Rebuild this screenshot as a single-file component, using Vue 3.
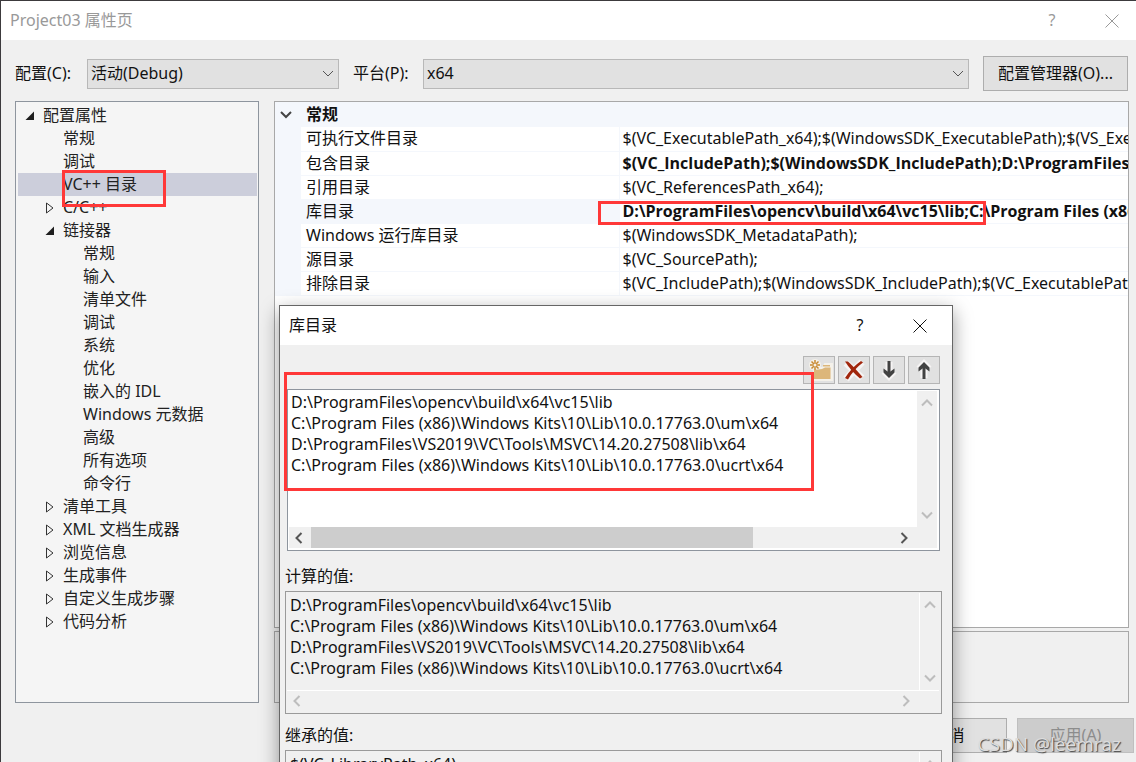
<script setup>
import { ref } from 'vue'

const config = ref('活动(Debug)')
const platform = ref('x64')

const tree = [
  { label: '配置属性', level: 0, state: 'open' },
  { label: '常规', level: 1 },
  { label: '调试', level: 1 },
  { label: 'VC++ 目录', level: 1, selected: true },
  { label: 'C/C++', level: 1, state: 'closed' },
  { label: '链接器', level: 1, state: 'open' },
  { label: '常规', level: 2 },
  { label: '输入', level: 2 },
  { label: '清单文件', level: 2 },
  { label: '调试', level: 2 },
  { label: '系统', level: 2 },
  { label: '优化', level: 2 },
  { label: '嵌入的 IDL', level: 2 },
  { label: 'Windows 元数据', level: 2 },
  { label: '高级', level: 2 },
  { label: '所有选项', level: 2 },
  { label: '命令行', level: 2 },
  { label: '清单工具', level: 1, state: 'closed' },
  { label: 'XML 文档生成器', level: 1, state: 'closed' },
  { label: '浏览信息', level: 1, state: 'closed' },
  { label: '生成事件', level: 1, state: 'closed' },
  { label: '自定义生成步骤', level: 1, state: 'closed' },
  { label: '代码分析', level: 1, state: 'closed' },
]

const rows = [
  { name: '可执行文件目录', value: '$(VC_ExecutablePath_x64);$(WindowsSDK_ExecutablePath);$(VS_ExecutablePath);' },
  { name: '包含目录', value: '$(VC_IncludePath);$(WindowsSDK_IncludePath);D:\\ProgramFiles\\opencv\\build\\include', bold: true },
  { name: '引用目录', value: '$(VC_ReferencesPath_x64);' },
  { name: '库目录', value: 'D:\\ProgramFiles\\opencv\\build\\x64\\vc15\\lib;C:\\Program Files (x86)\\Windows Kits', bold: true, active: true },
  { name: 'Windows 运行库目录', value: '$(WindowsSDK_MetadataPath);' },
  { name: '源目录', value: '$(VC_SourcePath);' },
  { name: '排除目录', value: '$(VC_IncludePath);$(WindowsSDK_IncludePath);$(VC_ExecutablePath_x64);' },
]

const paths = [
  'D:\\ProgramFiles\\opencv\\build\\x64\\vc15\\lib',
  'C:\\Program Files (x86)\\Windows Kits\\10\\Lib\\10.0.17763.0\\um\\x64',
  'D:\\ProgramFiles\\VS2019\\VC\\Tools\\MSVC\\14.20.27508\\lib\\x64',
  'C:\\Program Files (x86)\\Windows Kits\\10\\Lib\\10.0.17763.0\\ucrt\\x64',
].join('\n')
const userPaths = ref(paths)
const inherited = '$(VC_LibraryPath_x64)'
</script>

<template>
  <div class="window">
    <header class="titlebar">
      <h1 class="title">Project03 属性页</h1>
      <button class="caption" aria-label="帮助">?</button>
      <button class="caption" aria-label="关闭">
        <svg width="14" height="14" viewBox="0 0 14 14"><path d="M.5 .5l13 13M13.5 .5l-13 13" /></svg>
      </button>
    </header>

    <div class="options">
      <label for="cfg">配置(C):</label>
      <div class="combo combo-config">
        <select id="cfg" v-model="config"><option>活动(Debug)</option></select>
        <svg width="12" height="8" viewBox="0 0 12 8"><path d="M1 1l5 5 5-5" /></svg>
      </div>
      <label for="plat" class="platform-label">平台(P):</label>
      <div class="combo combo-platform">
        <select id="plat" v-model="platform"><option>x64</option></select>
        <svg width="12" height="8" viewBox="0 0 12 8"><path d="M1 1l5 5 5-5" /></svg>
      </div>
      <button class="push manager">配置管理器(O)...</button>
    </div>

    <main class="content">
      <ul class="tree" role="tree">
        <li
          v-for="(node, i) in tree"
          :key="i"
          role="treeitem"
          :class="['node', 'level-' + node.level, { selected: node.selected }]"
        >
          <span class="twisty">
            <svg v-if="node.state === 'open'" width="10" height="10" viewBox="0 0 10 10"><path class="solid" d="M9 .5v8.5H.5z" /></svg>
            <svg v-if="node.state === 'closed'" width="10" height="12" viewBox="0 0 10 12"><path class="hollow" d="M1.500 1v10L8 6z" /></svg>
          </span>
          <span>{{ node.label }}</span>
        </li>
      </ul>

      <section class="details">
        <div class="grid">
          <table>
            <colgroup><col class="c-gutter" /><col class="c-name" /><col /></colgroup>
            <thead>
              <tr>
                <th>
                  <svg width="12" height="8" viewBox="0 0 12 8"><path d="M1 1l5 5 5-5" /></svg>
                </th>
                <th colspan="2">常规</th>
              </tr>
            </thead>
            <tbody>
              <tr v-for="row in rows" :key="row.name" :class="{ active: row.active }">
                <td class="gutter"></td>
                <td class="name">{{ row.name }}</td>
                <td :class="['value', { bold: row.bold }]">{{ row.value }}</td>
              </tr>
            </tbody>
          </table>
        </div>
        <div class="description"></div>
      </section>
    </main>

    <footer class="actions">
      <button class="push">取消</button>
      <button class="push" disabled>应用(A)</button>
    </footer>

    <section class="dialog" role="dialog" aria-labelledby="dlg-title">
      <header class="titlebar">
        <h2 id="dlg-title" class="title">库目录</h2>
        <button class="caption" aria-label="帮助">?</button>
        <button class="caption" aria-label="关闭">
          <svg width="14" height="14" viewBox="0 0 14 14"><path d="M.5 .5l13 13M13.500 .5l-13 13" /></svg>
        </button>
      </header>
      <div class="dialog-body">
        <div class="tools">
          <button class="tool" aria-label="新行">
            <svg width="28" height="26" viewBox="0 0 28 26">
              <path class="halo" d="M9 11h9l2-4h7v16H9z" />
              <circle class="halo" cx="10" cy="8" r="5" />
              <path class="folder" d="M9 13l8-1 3-1.500h5.500V22H9z" />
              <path class="folder" d="M18 8h7v1.500h-7z" />
              <path class="spark" d="M10 3v10M5 8h10M6.500 4.500l7 7M13.500 4.500l-7 7" />
              <circle class="spark-core" cx="10" cy="8" r="1.500" />
            </svg>
          </button>
          <button class="tool" aria-label="删除">
            <svg width="28" height="26" viewBox="0 0 28 26">
              <path class="halo thick" d="M6 6l16 15M22 5L6 22" />
              <path class="cross" d="M5 4.500L8 4.500Q14 10 22.500 20L20 21.500Q11 14 5 4.500z" />
              <path class="cross" d="M21 4L23 5.500Q14 12 8 22.500L5 21Q12 10 21 4z" />
            </svg>
          </button>
          <button class="tool" aria-label="下移">
            <svg width="28" height="26" viewBox="0 0 28 26">
              <path class="halo thick" d="M14 5v14M9 14l5 5 5-5" />
              <path class="arrow" d="M14 4v14" />
              <path class="arrow-head" d="M8.500 11.500l5.500 4 5.500-4v4L14 21l-5.500-5.500z" />
            </svg>
          </button>
          <button class="tool" aria-label="上移">
            <svg width="28" height="26" viewBox="0 0 28 26">
              <path class="halo thick" d="M14 21V7M9 12l5-5 5 5" />
              <path class="arrow" d="M14 8v14" />
              <path class="arrow-head" d="M8.500 14.500l5.500-4 5.500 4v-4L14 5l-5.500 5.500z" />
            </svg>
          </button>
        </div>

        <div class="box editable">
          <textarea v-model="userPaths" aria-label="库目录" wrap="off" spellcheck="false"></textarea>
          <div class="vbar">
            <svg width="12" height="8" viewBox="0 0 12 8"><path d="M1 6.500l5-5 5 5" /></svg>
            <svg width="12" height="8" viewBox="0 0 12 8"><path d="M1 1.500l5 5 5-5" /></svg>
          </div>
          <div class="hbar">
            <svg width="8" height="12" viewBox="0 0 8 12"><path d="M6.500 1l-5 5 5 5" /></svg>
            <div class="track"><div class="thumb"></div></div>
            <svg width="8" height="12" viewBox="0 0 8 12"><path d="M1.500 1l5 5-5 5" /></svg>
          </div>
        </div>

        <label class="caption-label first" for="evaluated">计算的值:</label>
        <div class="box readonly">
          <textarea id="evaluated" readonly wrap="off" spellcheck="false" :value="paths"></textarea>
          <div class="vbar">
            <svg width="12" height="8" viewBox="0 0 12 8"><path d="M1 6.500l5-5 5 5" /></svg>
            <svg width="12" height="8" viewBox="0 0 12 8"><path d="M1 1.500l5 5 5-5" /></svg>
          </div>
          <div class="hbar">
            <svg width="8" height="12" viewBox="0 0 8 12"><path d="M6.500 1l-5 5 5 5" /></svg>
            <div class="track"></div>
            <svg width="8" height="12" viewBox="0 0 8 12"><path d="M1.500 1l5 5-5 5" /></svg>
          </div>
        </div>

        <label class="caption-label" for="inherited">继承的值:</label>
        <div class="box readonly">
          <textarea id="inherited" readonly wrap="off" spellcheck="false" :value="inherited"></textarea>
          <div class="vbar">
            <svg width="12" height="8" viewBox="0 0 12 8"><path d="M1 6.500l5-5 5 5" /></svg>
            <svg width="12" height="8" viewBox="0 0 12 8"><path d="M1 1.500l5 5 5-5" /></svg>
          </div>
          <div class="hbar"></div>
        </div>
      </div>
    </section>

    <div class="mark mark-node"></div>
    <div class="mark mark-value"></div>
    <div class="mark mark-paths"></div>
    <div class="watermark">CSDN @leemraz</div>
  </div>
</template>

<style>
body {
  background: #f0f0f0;
}
</style>

<style scoped>
* {
  box-sizing: border-box;
}
.window {
  position: relative;
  display: flex;
  flex-direction: column;
  height: 100vh;
  overflow: hidden;
  background: #f0f0f0;
  border-top: 1px solid #3c3a3d;
  border-left: 1px solid #3c3a3d;
  font: 16px/23px "Noto Sans", "Noto Sans CJK SC", sans-serif;
  color: #111;
}
button,
select,
textarea {
  font: inherit;
  color: inherit;
  margin: 0;
}
svg {
  display: block;
  fill: none;
  stroke: currentColor;
}
.titlebar {
  display: flex;
  align-items: center;
  flex: none;
  height: 39px;
  background: #fff;
  padding-left: 9px;
}
.title {
  flex: 1;
  margin: 0;
  font-size: 16px;
  font-weight: 400;
}
.caption {
  display: flex;
  align-items: center;
  justify-content: center;
  width: 60px;
  height: 38px;
  padding: 0;
  border: 0;
  background: none;
}
.window > .titlebar {
  color: #999;
}
.window > .titlebar .caption:last-child {
  width: 49px;
}
.window > .titlebar .caption:nth-child(2) {
  width: 70px;
}
.options {
  display: flex;
  align-items: center;
  flex: none;
  padding: 16px 8px 10px 14px;
}
.combo {
  position: relative;
  height: 30px;
}
.combo select {
  display: block;
  width: 100%;
  height: 30px;
  padding: 0 4px 0 3px;
  appearance: none;
  border: 1px solid #b8b8b8;
  border-radius: 0;
  background: #e1e1e1;
}
.combo svg {
  position: absolute;
  right: 5px;
  top: 11px;
  color: #555;
  pointer-events: none;
}
.options label {
  width: 72px;
}
.options .platform-label {
  width: 70px;
  margin-left: 14px;
}
.combo-config {
  width: 252px;
}
.combo-platform {
  flex: 1;
}
.push {
  width: 117px;
  height: 35px;
  padding: 0;
  border: 1px solid #adadad;
  background: #e1e1e1;
}
.push:disabled {
  background: #ccc;
  border-color: #bfbfbf;
  color: #8c8c8c;
}
.manager {
  width: 145px;
  margin-left: 14px;
}
.content {
  display: flex;
  flex: 1;
  gap: 15px;
  min-height: 0;
  padding: 0 7px 0 14px;
}
.tree {
  flex: none;
  width: 244px;
  margin: 0;
  padding: 2px 1px 2px 2px;
  border: 1px solid #8e959e;
  background: #f5f5f5;
  list-style: none;
}
.node {
  display: flex;
  align-items: center;
  height: 23px;
  color: #222;
  white-space: nowrap;
}
.level-0 {
  padding-left: 7px;
}
.level-1 {
  padding-left: 27px;
}
.level-2 {
  padding-left: 47px;
}
.selected {
  background: #cccedb;
}
.twisty {
  width: 18px;
}
.solid {
  fill: #1e1e1e;
  stroke: none;
}
.hollow {
  stroke: #333;
}
.details {
  display: flex;
  flex: 1;
  flex-direction: column;
  gap: 3px;
  min-width: 0;
}
.grid {
  flex: 1;
  min-height: 0;
  overflow: hidden;
  border: 1px solid #a8a8a8;
  background: #fff;
}
.grid table {
  width: 100%;
  table-layout: fixed;
  border-collapse: collapse;
}
.c-gutter {
  width: 26px;
}
.c-name {
  width: 318px;
}
.grid th {
  height: 25px;
  padding: 0 5px;
  background: #f4f7fc;
  text-align: left;
  font-weight: 700;
}
.grid th svg {
  stroke-width: 2;
  color: #444;
}
.grid td {
  height: 24px;
  padding: 0 3px;
  overflow: hidden;
  border-bottom: 1px solid #f4f7fc;
  white-space: nowrap;
}
.grid .gutter,
.active .name {
  background: #f4f7fc;
}
.grid .name {
  padding-left: 5px;
  border-right: 1px solid #f4f7fc;
}
.grid .bold {
  font-family: "Open Sans", "Noto Sans CJK SC", sans-serif;
  font-weight: 700;
}
.description {
  flex: none;
  height: 72px;
  border: 1px solid #a8a8a8;
}
.actions {
  display: flex;
  flex: none;
  justify-content: flex-end;
  gap: 10px;
  padding: 15px 2px 9px;
}
.dialog {
  position: absolute;
  left: 278px;
  top: 304px;
  width: 674px;
  border: 1px solid #666;
  background: #f0f0f0;
  box-shadow: 0 6px 18px rgba(0, 0, 0, 0.4);
}
.dialog .titlebar {
  padding-right: 2px;
}
.dialog-body {
  padding: 11px 10px 20px 5px;
}
.tools {
  display: flex;
  justify-content: flex-end;
  gap: 3px;
  padding-right: 2px;
  margin-bottom: 5px;
}
.tool {
  display: flex;
  align-items: center;
  justify-content: center;
  width: 32px;
  height: 28px;
  padding: 0;
  border: 1px solid #b5b5b5;
  background: #e1e1e1;
}
.halo {
  fill: #f4f1ea;
  stroke: #f4f1ea;
  stroke-width: 2;
}
.halo.thick {
  fill: none;
  stroke-width: 7;
  stroke: #f6f4f4;
}
.folder {
  fill: #dcb67a;
  stroke: none;
}
.spark {
  stroke: #c88a32;
  stroke-width: 1.5;
}
.spark-core {
  fill: #f4f1ea;
  stroke: none;
}
.cross {
  fill: #a1260d;
  stroke: none;
}
.arrow {
  stroke: #424242;
  stroke-width: 3;
}
.arrow-head {
  fill: #424242;
  stroke: none;
}
.box {
  display: grid;
  grid-template-columns: 1fr 20px;
  grid-template-rows: 1fr 21px;
  padding: 1px 2px 2px 1px;
  border: 1px solid #9a9a9a;
}
.box textarea {
  display: block;
  width: 100%;
  height: 100%;
  padding: 1px 2px;
  border: 0;
  resize: none;
  overflow: hidden;
  background: none;
  line-height: 21px;
  white-space: pre;
}
.editable {
  height: 162px;
  margin: 0 2px;
  border-color: #8e959e;
  background: #fff;
}
.readonly {
  height: 123px;
}
.readonly textarea {
  padding: 2px 3px;
}
.vbar,
.hbar {
  display: flex;
  align-items: center;
  justify-content: space-between;
  background: #f0f0f0;
  color: #bdbdbd;
}
.vbar svg,
.hbar svg {
  stroke-width: 2;
}
.vbar {
  flex-direction: column;
  padding: 8px 0;
}
.hbar {
  grid-column: 1 / -1;
  padding: 0 29px 0 6px;
}
.readonly .vbar {
  border-left: 1px solid #fff;
}
.readonly .hbar {
  border-top: 1px solid #fff;
}
.editable .hbar {
  color: #555;
}
.track {
  flex: 1;
  align-self: stretch;
  margin: 0 8px;
}
.thumb {
  width: 76%;
  height: 100%;
  background: #cdcdcd;
}
.caption-label {
  display: block;
  padding: 10px 0 3px;
}
.caption-label.first {
  padding-top: 14px;
}
.mark {
  position: absolute;
  border: 3px solid #ff3838;
  pointer-events: none;
}
.mark-node {
  left: 61px;
  top: 169px;
  width: 104px;
  height: 37px;
}
.mark-value {
  left: 597px;
  top: 200px;
  width: 388px;
  height: 24px;
}
.mark-paths {
  left: 283px;
  top: 371px;
  width: 530px;
  height: 119px;
}
.watermark {
  position: absolute;
  right: 15px;
  bottom: 6px;
  font-family: "Open Sans", sans-serif;
  font-size: 19px;
  line-height: 24px;
  color: #ddd;
  text-shadow: 1px 1px 1px #444;
}
</style>
